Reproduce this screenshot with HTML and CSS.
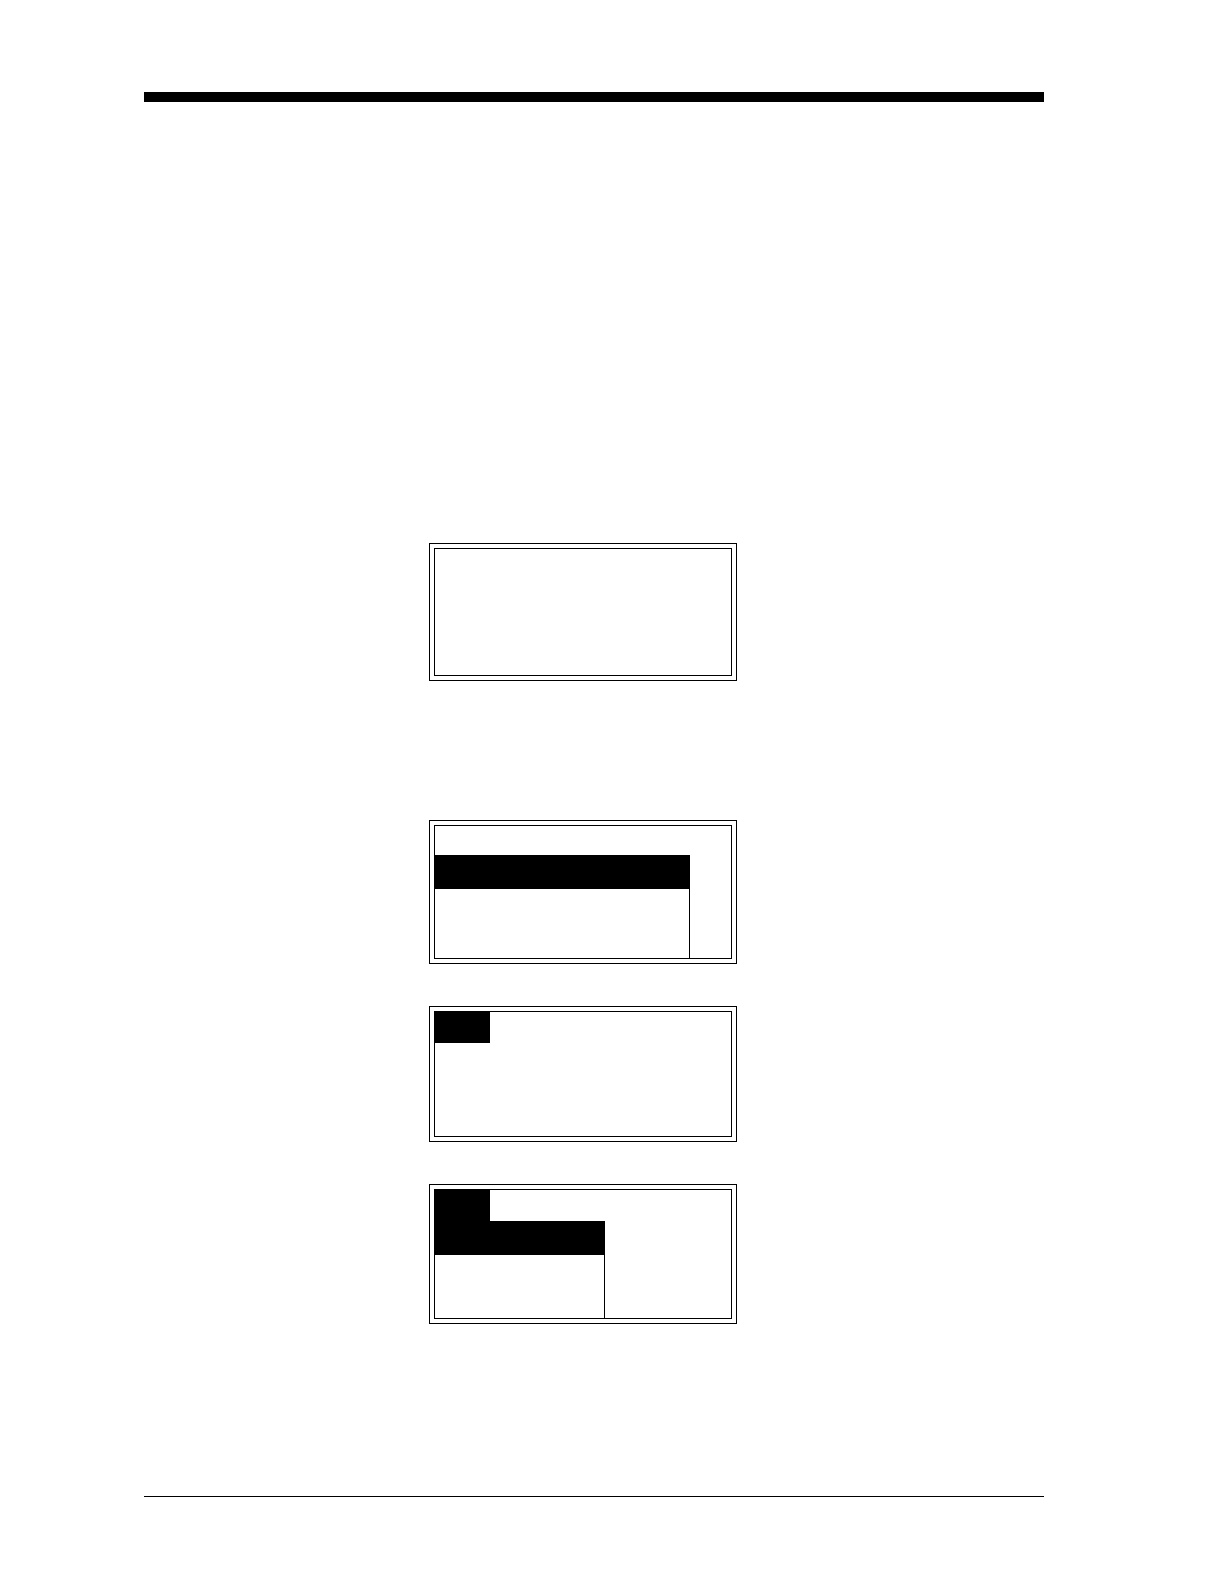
FILE: index.html
```html
<!DOCTYPE html>
<html lang="en">
<head>
    <meta charset="UTF-8">
    <meta name="viewport" content="width=device-width, initial-scale=1.0">
    <title>Display Screens</title>
    <link rel="stylesheet" href="styles.css">
</head>
<body>

    <div class="page">
        <header class="top-rule"></header>

        <main class="screens">
            <div class="screen screen-blank">
                <div class="display"></div>
            </div>

            <div class="screen screen-list">
                <div class="display">
                    <div class="title-row"></div>
                    <div class="menu menu-wide">
                        <div class="selected-row"></div>
                    </div>
                </div>
            </div>

            <div class="screen screen-tab">
                <div class="display">
                    <div class="title-row">
                        <div class="tab"></div>
                    </div>
                </div>
            </div>

            <div class="screen screen-dropdown">
                <div class="display">
                    <div class="title-row">
                        <div class="tab"></div>
                    </div>
                    <div class="menu">
                        <div class="selected-row"></div>
                    </div>
                </div>
            </div>
        </main>

        <footer class="bottom-rule"></footer>
    </div>

</body>
</html>
```
FILE: styles.css
```css
body {
    background-color: #fff;
    margin: 0;
}
.page {
    box-sizing: border-box;
    display: flex;
    flex-direction: column;
    min-height: 100vh;
    padding: 92px 180px 87px 144px;
}
.top-rule {
    height: 10px;
    background-color: #000;
}
.screens {
    display: flex;
    flex-direction: column;
    flex: 1;
    gap: 42px;
    padding: 441px 0 42px 285px;
}
/* Double frame: outer line on the screen, inner line on the display */
.screen {
    box-sizing: border-box;
    display: flex;
    width: 308px;
    padding: 4px;
    border: 1px solid #000;
}
.display {
    display: flex;
    flex-direction: column;
    flex: 1;
    border: 1px solid #000;
}
.screen-blank {
    min-height: 138px;
    margin-bottom: 97px;
}
.screen-list {
    min-height: 144px;
}
.screen-tab {
    min-height: 136px;
}
.screen-dropdown {
    min-height: 140px;
}
.title-row {
    display: flex;
    height: 31px;
}
.screen-list .title-row {
    height: 29px;
}
.tab {
    width: 55px;
    background-color: #000;
}
.menu {
    box-sizing: border-box;
    flex: 1;
    width: 170px;
    border-right: 1px solid #000;
}
.menu-wide {
    width: 255px;
}
.selected-row {
    height: 34px;
    background-color: #000;
}
.bottom-rule {
    height: 1px;
    background-color: #000;
}
```
